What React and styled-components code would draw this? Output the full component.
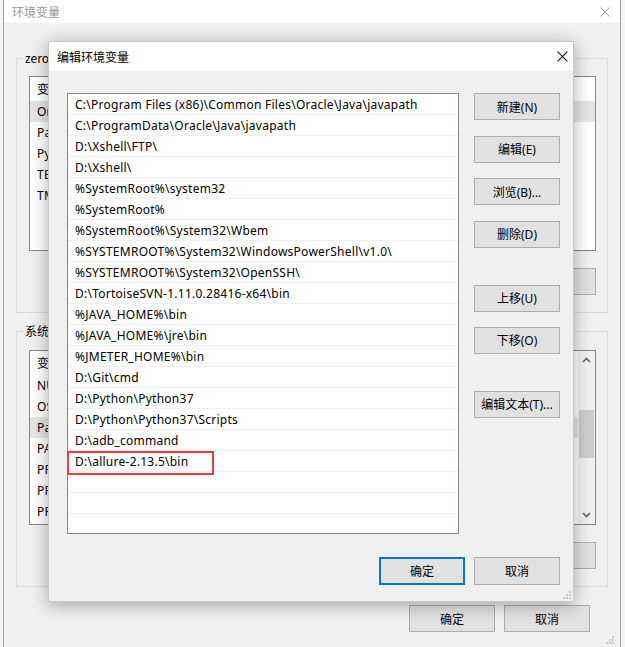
import React from "react";
import styled, { createGlobalStyle } from "styled-components";

const GlobalStyle = createGlobalStyle`
	html, body {
		margin: 0;
		padding: 0;
		background: #f3f3f3;
	}
	body {
		font-family: "Noto Sans", "Noto Sans CJK SC", sans-serif;
		font-size: 12px;
		color: #000;
	}
`;

const Screen = styled.div`
	position: relative;
	width: 625px;
	height: 647px;
	overflow: hidden;
	display: flex;
	background: #f3f3f3;
`;

const EdgeStrip = styled.div`
	flex: none;
	width: ${(p) => p.$w}px;
	background: #f6f6f6;
`;

const BackWindow = styled.div`
	position: relative;
	flex: none;
	width: 618px;
	box-sizing: border-box;
	display: flex;
	flex-direction: column;
	background: #f0f0f0;
	border-left: 1px solid #9c9c9c;
	border-right: 1px solid #9c9c9c;
`;

const TitleBar = styled.div`
	flex: none;
	height: ${(p) => p.$h}px;
	display: flex;
	align-items: center;
	justify-content: space-between;
	background: #fff;
	padding: 0 ${(p) => p.$padR}px 0 ${(p) => p.$padL}px;
`;

const TitleText = styled.span`
	font-family: "Noto Sans CJK SC", sans-serif;
	font-size: 12px;
	color: ${(p) => (p.$inactive ? "#999" : "#000")};
`;

const BackBody = styled.div`
	flex: 1;
	display: flex;
	flex-direction: column;
	padding: 27px 12px 0 12px;
`;

const GroupBox = styled.fieldset`
	margin: 0 0 ${(p) => p.$mb}px 0;
	padding: ${(p) => p.$pt}px 11px 17px 12px;
	border: 1px solid #dcdcdc;
	min-width: 0;
`;

const Legend = styled.legend`
	padding: 0 2px;
	margin-left: -6px;
	line-height: 16px;
	font-family: "Noto Sans CJK SC", sans-serif;
	font-size: 12px;
	white-space: nowrap;
`;

const VarList = styled.div`
	position: relative;
	height: 175px;
	box-sizing: border-box;
	border: 1px solid #828790;
	background: #fff;
	overflow: hidden;
`;

const VarRow = styled.div`
	display: flex;
	align-items: center;
	height: ${(p) => (p.$header ? 24 : 21)}px;
	padding-left: 7px;
	background: ${(p) => (p.$selected ? "#e5e5e5" : "transparent")};
	font-family: "Noto Sans", "Noto Sans CJK SC", sans-serif;
	letter-spacing: 0.25px;
	white-space: nowrap;
`;

const VarName = styled.span`
	width: 180px;
	flex: none;
`;

const ScrollTrack = styled.div`
	position: absolute;
	top: 0;
	right: 0;
	bottom: 0;
	width: 17px;
	background: #f0f0f0;
	display: flex;
	flex-direction: column;
	align-items: center;
	justify-content: space-between;
	padding: 6px 0;
	box-sizing: border-box;
`;

const ScrollThumb = styled.div`
	position: absolute;
	left: 1px;
	right: 1px;
	top: 59px;
	height: 48px;
	background: #cdcdcd;
`;

const ButtonRow = styled.div`
	display: flex;
	justify-content: flex-end;
	gap: 9px;
	margin-top: ${(p) => p.$mt}px;
	padding-right: ${(p) => p.$pr || 0}px;
`;

const Button = styled.button`
	width: 86px;
	height: ${(p) => p.$h || 27}px;
	flex: none;
	box-sizing: border-box;
	margin: 0;
	margin-top: ${(p) => p.$mt || 0}px;
	padding: 0;
	background: #e1e1e1;
	border: ${(p) => (p.$default ? "2px solid #0078d7" : "1px solid #adadad")};
	font-family: "Noto Sans", "Noto Sans CJK SC", sans-serif;
	font-size: 12px;
	color: #000;
	white-space: nowrap;
`;

const Dialog = styled.div`
	position: absolute;
	left: 48px;
	top: 41px;
	width: 526px;
	height: 561px;
	box-sizing: border-box;
	display: flex;
	flex-direction: column;
	background: #f0f0f0;
	border: 1px solid #c9c9c9;
	box-shadow: 0 3px 16px rgba(0, 0, 0, 0.32);
`;

const DialogBody = styled.div`
	position: relative;
	flex: 1;
	display: flex;
	flex-direction: column;
	padding: 22px 13px 0 18px;
`;

const DialogMain = styled.div`
	display: flex;
	gap: 15px;
`;

const ListArea = styled.div`
	position: relative;
	flex: none;
`;

const PathList = styled.div`
	width: 392px;
	height: 441px;
	box-sizing: border-box;
	border: 1px solid #828790;
	background: #fff;
	overflow: hidden;
`;

const PathRow = styled.div`
	height: 21px;
	box-sizing: border-box;
	border-bottom: 1px solid #f0f0f0;
	padding-left: 7px;
	line-height: 21px;
	white-space: nowrap;
	font-family: "Noto Sans", "Noto Sans CJK SC", sans-serif;
	font-size: 12px;
	letter-spacing: 0.25px;
`;

const Annotation = styled.div`
	position: absolute;
	left: 0;
	top: 358px;
	width: 147px;
	height: 24px;
	box-sizing: border-box;
	border: 2px solid #f23b3b;
	pointer-events: none;
`;

const ButtonColumn = styled.div`
	display: flex;
	flex-direction: column;
`;

const Grip = styled.svg`
	position: absolute;
	right: ${(p) => p.$r}px;
	bottom: ${(p) => p.$b}px;
`;

const CloseIcon = ({ color, size }) => (
	<svg width={size} height={size} viewBox="0 0 10 10">
		<path d="M0.5 0.5 L9.5 9.5 M9.5 0.5 L0.5 9.5" stroke={color} strokeWidth="1" fill="none" />
	</svg>
);

const Chevron = ({ up }) => (
	<svg width="9" height="6" viewBox="0 0 9 6">
		<path d={up ? "M1 5 L4.5 1.5 L8 5" : "M1 1 L4.5 4.5 L8 1"} stroke="#606060" strokeWidth="1.6" fill="none" />
	</svg>
);

const GripDots = ({ r, b }) => (
	<Grip $r={r} $b={b} width="8" height="8" viewBox="0 0 8 8">
		<rect x="6" y="0" width="2" height="2" fill="#c8c8c8" />
		<rect x="3" y="3" width="2" height="2" fill="#c8c8c8" />
		<rect x="6" y="3" width="2" height="2" fill="#c8c8c8" />
		<rect x="0" y="6" width="2" height="2" fill="#c8c8c8" />
		<rect x="3" y="6" width="2" height="2" fill="#c8c8c8" />
		<rect x="6" y="6" width="2" height="2" fill="#c8c8c8" />
	</Grip>
);

const userVars = ["OneDrive", "Path", "PyCharm Community Edition", "TEMP", "TMP"];
const systemVars = [
	"NUMBER_OF_PROCESSORS",
	"OS",
	"Path",
	"PATHEXT",
	"PROCESSOR_ARCHITECTURE",
	"PROCESSOR_IDENTIFIER",
	"PROCESSOR_LEVEL",
];

const paths = [
	"C:\\Program Files (x86)\\Common Files\\Oracle\\Java\\javapath",
	"C:\\ProgramData\\Oracle\\Java\\javapath",
	"D:\\Xshell\\FTP\\",
	"D:\\Xshell\\",
	"%SystemRoot%\\system32",
	"%SystemRoot%",
	"%SystemRoot%\\System32\\Wbem",
	"%SYSTEMROOT%\\System32\\WindowsPowerShell\\v1.0\\",
	"%SYSTEMROOT%\\System32\\OpenSSH\\",
	"D:\\TortoiseSVN-1.11.0.28416-x64\\bin",
	"%JAVA_HOME%\\bin",
	"%JAVA_HOME%\\jre\\bin",
	"%JMETER_HOME%\\bin",
	"D:\\Git\\cmd",
	"D:\\Python\\Python37",
	"D:\\Python\\Python37\\Scripts",
	"D:\\adb_command",
	"D:\\allure-2.13.5\\bin",
	"",
	"",
	"",
];

const App = () => {
	return (
		<Screen>
			<GlobalStyle />
			<EdgeStrip $w={3} />
			<BackWindow>
				<TitleBar $h={23} $padL={8} $padR={10}>
					<TitleText $inactive>环境变量</TitleText>
					<CloseIcon color="#a0a0a0" size={10} />
				</TitleBar>
				<BackBody>
					<GroupBox $pt={10} $mb={10}>
						<Legend>zero 的用户变量(U)</Legend>
						<VarList>
							<VarRow $header>
								<VarName>变量</VarName>
								<span>值</span>
							</VarRow>
							{userVars.map((v, i) => (
								<VarRow key={v} $selected={i === 0}>
									<VarName>{v}</VarName>
								</VarRow>
							))}
						</VarList>
						<ButtonRow $mt={17}>
							<Button>新建(N)...</Button>
							<Button>编辑(E)...</Button>
							<Button>删除(D)</Button>
						</ButtonRow>
					</GroupBox>
					<GroupBox $pt={11} $mb={0}>
						<Legend>系统变量(S)</Legend>
						<VarList>
							<VarRow $header>
								<VarName>变量</VarName>
								<span>值</span>
							</VarRow>
							{systemVars.map((v, i) => (
								<VarRow key={v + i} $selected={i === 2}>
									<VarName>{v}</VarName>
								</VarRow>
							))}
							<ScrollTrack>
								<Chevron up />
								<Chevron />
								<ScrollThumb />
							</ScrollTrack>
						</VarList>
						<ButtonRow $mt={17}>
							<Button>新建(W)...</Button>
							<Button>编辑(I)...</Button>
							<Button>删除(L)</Button>
						</ButtonRow>
					</GroupBox>
					<ButtonRow $mt={18} $pr={18}>
						<Button>确定</Button>
						<Button>取消</Button>
					</ButtonRow>
				</BackBody>
				<GripDots r={6} b={3} />
			</BackWindow>
			<EdgeStrip $w={4} />

			<Dialog>
				<TitleBar $h={29} $padL={8} $padR={5}>
					<TitleText>编辑环境变量</TitleText>
					<CloseIcon color="#111" size={11} />
				</TitleBar>
				<DialogBody>
					<DialogMain>
						<ListArea>
							<PathList>
								{paths.map((p, i) => (
									<PathRow key={i}>{p}</PathRow>
								))}
							</PathList>
							<Annotation />
						</ListArea>
						<ButtonColumn>
							<Button>新建(N)</Button>
							<Button $mt={15.67}>编辑(E)</Button>
							<Button $mt={15.67}>浏览(B)...</Button>
							<Button $mt={15.67}>删除(D)</Button>
							<Button $mt={37}>上移(U)</Button>
							<Button $mt={15}>下移(O)</Button>
							<Button $mt={37}>编辑文本(T)...</Button>
						</ButtonColumn>
					</DialogMain>
					<ButtonRow $mt={23}>
						<Button $h={28} $default>确定</Button>
						<Button $h={28}>取消</Button>
					</ButtonRow>
					<GripDots r={2} b={2} />
				</DialogBody>
			</Dialog>
		</Screen>
	);
};

export default App;
